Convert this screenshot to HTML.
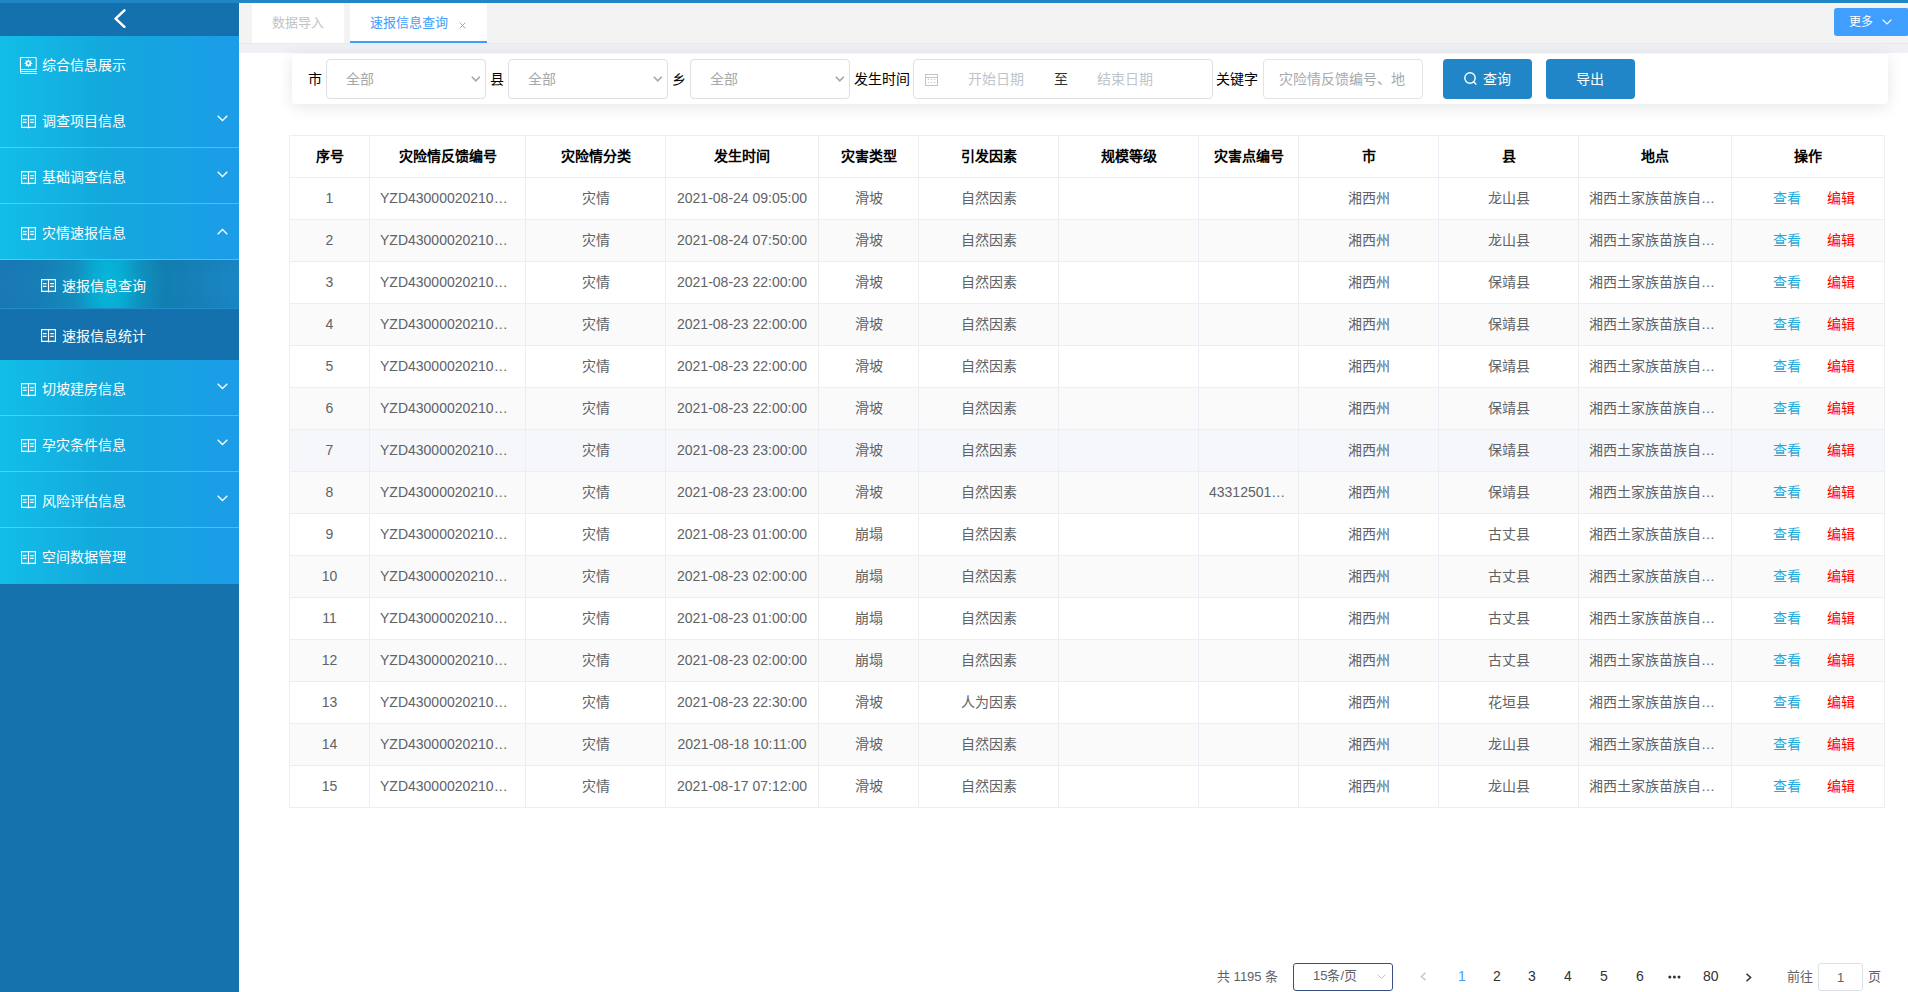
<!DOCTYPE html>
<html lang="zh-CN"><head><meta charset="utf-8">
<style>
*{box-sizing:border-box;margin:0;padding:0}
html,body{width:1908px;height:992px;overflow:hidden;background:#fff;font-family:"Liberation Sans",sans-serif;font-size:14px;color:#606266}
.topstrip{position:absolute;left:0;top:0;width:1908px;height:3px;background:#2086c6}
#side{position:absolute;left:0;top:0;width:239px;height:992px;background:#1572ad}
#side .hdr{position:absolute;left:0;top:3px;width:239px;height:33px;background:#1571ad}
#side .hdr svg{position:absolute;left:113px;top:5px}
.mi{position:absolute;left:0;width:239px;color:#fff;background:linear-gradient(90deg,#12bee8 0%,#14a8dd 45%,#1b9ce8 100%)}
.mi.bb{border-bottom:1px solid rgba(255,255,255,0.28)}
.mi .ic{position:absolute;left:21px;top:23px}
.mi.first .ic{left:19px;top:20px}
.mi .mt{position:absolute;left:42px;top:1px;line-height:56px;font-size:14px;letter-spacing:0}
.mi .chev{position:absolute;left:217px;top:23px}
.sub{position:absolute;left:0;width:239px;height:50px;color:#fff;background:#1571ad}
.sub.active{height:49px;border-bottom:1px solid #1f8fcc;background:linear-gradient(180deg,rgba(20,90,150,0.06) 0%,rgba(20,90,150,0) 40%,rgba(20,90,150,0) 60%,rgba(20,90,150,0.06) 100%),linear-gradient(90deg,#1a78b6 0%,#177fb6 18%,#1290c0 32%,#09aad3 39%,#06b6da 45%,#08aed5 51%,#0e92c0 59%,#127fb0 69%,#1680b8 82%,#1a87c6 100%)}
.sub .ic{position:absolute;left:41px;top:19px}
.sub .mt{position:absolute;left:62px;top:1px;line-height:50px}
#tabs{position:absolute;left:239px;top:3px;width:1669px;height:40px;background:#f3f3f3;border-left:1px solid #fff}
.tab{position:absolute;top:0;height:40px;background:#fff;font-size:13px;line-height:40px}
.tab1{left:12px;width:92px;color:#c2c2c2;text-align:center}
.tab2{left:110px;width:137px;color:#409eff;border-bottom:2px solid #409eff}
.more{position:absolute;left:1594px;top:5px;width:75px;height:28px;background:#409eff;border-radius:3px;color:#fff;font-size:12px;line-height:28px}
#band{position:absolute;left:239px;top:43px;width:1669px;height:10px;background:#eff0f3;border-top:1px solid #e8e9ec}
#card{position:absolute;left:292px;top:54px;width:1596px;height:50px;background:#fff;border-radius:4px;box-shadow:0 3px 15px 0 rgba(0,0,0,0.1)}
.lbl{position:absolute;top:0;line-height:50px;color:#000;font-size:14px}
.sel{position:absolute;top:5px;height:40px;border:1px solid #dcdfe6;border-radius:4px;color:#a6a8ac;line-height:38px;padding-left:19px}
.sel svg{position:absolute;left:144px;top:16px}
.btn{position:absolute;top:5px;height:40px;width:89px;border-radius:4px;background:#2086c7;color:#fff;line-height:40px;text-align:center}
#tbl{position:absolute;left:289px;top:135px;border-collapse:collapse;table-layout:fixed;width:1596px;border-top:1px solid #ebeef5;border-left:1px solid #ebeef5}
#tbl th,#tbl td{border-right:1px solid #ebeef5;border-bottom:1px solid #ebeef5;text-align:center;height:42px;padding:0 10px 1px;white-space:nowrap;overflow:hidden;line-height:20px}
#tbl th{color:#000;font-weight:bold;font-size:14px}
#tbl td{color:#606266;font-size:14px}
#tbl tr.st td{background:#fafafa}
#tbl tr.hv td{background:#f5f7fa}
.el{overflow:hidden;text-overflow:ellipsis;white-space:nowrap}
.op{padding-left:22px !important}
.op .vw{color:#1fa8dc;margin-right:26px}
.op .ed{color:#f00}
#pg{position:absolute;left:0;top:962px;width:1908px;height:30px;font-size:13px;color:#606266}
#pg .it{position:absolute;top:0;line-height:28px}
#pg .pn{font-size:14px;top:-0.5px}
</style></head><body>
<div id="side">
 <div class="hdr"><svg width="14" height="20" viewBox="0 0 14 20"><path d="M11.4 2.4 L2.6 10.6 L11.4 18.8" fill="none" stroke="#fff" stroke-width="2.5" stroke-linecap="round" stroke-linejoin="round"/></svg></div>
 <div class="mi first" style="top:36px;height:56px"><svg class="ic" width="19" height="19" viewBox="0 0 19 19"><g fill="none" stroke="#fff" stroke-width="1"><path d="M1.45 1.55 H17.2 V13.55 H1.45 Z" stroke-linejoin="miter"/><path d="M1.45 13.5 V16.4 Q1.45 17.45 2.5 17.45 H17.9"/><path d="M2.3 15.5 H17.7"/></g><path d="M9.40 3.00 L10.38 4.94 L12.44 4.26 L11.76 6.32 L13.70 7.30 L11.76 8.28 L12.44 10.34 L10.38 9.66 L9.40 11.60 L8.42 9.66 L6.36 10.34 L7.04 8.28 L5.10 7.30 L7.04 6.32 L6.36 4.26 L8.42 4.94 Z M10.6 7.3 A1.2 1.2 0 1 0 8.200000000000001 7.3 A1.2 1.2 0 1 0 10.6 7.3 Z" fill="#fff" fill-rule="evenodd"/></svg><span class="mt">综合信息展示</span></div><div class="mi bb" style="top:92px;height:56px"><svg class="ic" width="16" height="15" viewBox="0 0 16 15"><g fill="none" stroke="#fff" stroke-width="1.1"><path d="M0.6 0.6 H14.4 V12.4 H0.6 Z"/><path d="M7.5 0.6 V13.4"/><path d="M2 4.6 H5.6 M2 7.4 H5.6 M9.2 4.6 H12.8 M9.2 7.4 H12.8"/></g></svg><span class="mt">调查项目信息</span><svg class="chev" width="11" height="7" viewBox="0 0 11 7"><path d="M0.7 0.7 L5.5 5.5 L10.3 0.7" fill="none" stroke="#fff" stroke-width="1.3"/></svg></div><div class="mi bb" style="top:148px;height:56px"><svg class="ic" width="16" height="15" viewBox="0 0 16 15"><g fill="none" stroke="#fff" stroke-width="1.1"><path d="M0.6 0.6 H14.4 V12.4 H0.6 Z"/><path d="M7.5 0.6 V13.4"/><path d="M2 4.6 H5.6 M2 7.4 H5.6 M9.2 4.6 H12.8 M9.2 7.4 H12.8"/></g></svg><span class="mt">基础调查信息</span><svg class="chev" width="11" height="7" viewBox="0 0 11 7"><path d="M0.7 0.7 L5.5 5.5 L10.3 0.7" fill="none" stroke="#fff" stroke-width="1.3"/></svg></div><div class="mi bb" style="top:204px;height:56px"><svg class="ic" width="16" height="15" viewBox="0 0 16 15"><g fill="none" stroke="#fff" stroke-width="1.1"><path d="M0.6 0.6 H14.4 V12.4 H0.6 Z"/><path d="M7.5 0.6 V13.4"/><path d="M2 4.6 H5.6 M2 7.4 H5.6 M9.2 4.6 H12.8 M9.2 7.4 H12.8"/></g></svg><span class="mt">灾情速报信息</span><svg class="chev" style="top:24px" width="11" height="7" viewBox="0 0 11 7"><path d="M0.7 6.3 L5.5 1.5 L10.3 6.3" fill="none" stroke="#fff" stroke-width="1.3"/></svg></div><div class="mi bb" style="top:360px;height:56px"><svg class="ic" width="16" height="15" viewBox="0 0 16 15"><g fill="none" stroke="#fff" stroke-width="1.1"><path d="M0.6 0.6 H14.4 V12.4 H0.6 Z"/><path d="M7.5 0.6 V13.4"/><path d="M2 4.6 H5.6 M2 7.4 H5.6 M9.2 4.6 H12.8 M9.2 7.4 H12.8"/></g></svg><span class="mt">切坡建房信息</span><svg class="chev" width="11" height="7" viewBox="0 0 11 7"><path d="M0.7 0.7 L5.5 5.5 L10.3 0.7" fill="none" stroke="#fff" stroke-width="1.3"/></svg></div><div class="mi bb" style="top:416px;height:56px"><svg class="ic" width="16" height="15" viewBox="0 0 16 15"><g fill="none" stroke="#fff" stroke-width="1.1"><path d="M0.6 0.6 H14.4 V12.4 H0.6 Z"/><path d="M7.5 0.6 V13.4"/><path d="M2 4.6 H5.6 M2 7.4 H5.6 M9.2 4.6 H12.8 M9.2 7.4 H12.8"/></g></svg><span class="mt">孕灾条件信息</span><svg class="chev" width="11" height="7" viewBox="0 0 11 7"><path d="M0.7 0.7 L5.5 5.5 L10.3 0.7" fill="none" stroke="#fff" stroke-width="1.3"/></svg></div><div class="mi bb" style="top:472px;height:56px"><svg class="ic" width="16" height="15" viewBox="0 0 16 15"><g fill="none" stroke="#fff" stroke-width="1.1"><path d="M0.6 0.6 H14.4 V12.4 H0.6 Z"/><path d="M7.5 0.6 V13.4"/><path d="M2 4.6 H5.6 M2 7.4 H5.6 M9.2 4.6 H12.8 M9.2 7.4 H12.8"/></g></svg><span class="mt">风险评估信息</span><svg class="chev" width="11" height="7" viewBox="0 0 11 7"><path d="M0.7 0.7 L5.5 5.5 L10.3 0.7" fill="none" stroke="#fff" stroke-width="1.3"/></svg></div><div class="mi" style="top:528px;height:56px"><svg class="ic" width="16" height="15" viewBox="0 0 16 15"><g fill="none" stroke="#fff" stroke-width="1.1"><path d="M0.6 0.6 H14.4 V12.4 H0.6 Z"/><path d="M7.5 0.6 V13.4"/><path d="M2 4.6 H5.6 M2 7.4 H5.6 M9.2 4.6 H12.8 M9.2 7.4 H12.8"/></g></svg><span class="mt">空间数据管理</span></div>
 <div class="sub active" style="top:260px"><svg class="ic" width="16" height="15" viewBox="0 0 16 15"><g fill="none" stroke="#fff" stroke-width="1.1"><path d="M0.6 0.6 H14.4 V12.4 H0.6 Z"/><path d="M7.5 0.6 V13.4"/><path d="M2 4.6 H5.6 M2 7.4 H5.6 M9.2 4.6 H12.8 M9.2 7.4 H12.8"/></g></svg><span class="mt">速报信息查询</span></div>
<div class="sub" style="top:310px"><svg class="ic" width="16" height="15" viewBox="0 0 16 15"><g fill="none" stroke="#fff" stroke-width="1.1"><path d="M0.6 0.6 H14.4 V12.4 H0.6 Z"/><path d="M7.5 0.6 V13.4"/><path d="M2 4.6 H5.6 M2 7.4 H5.6 M9.2 4.6 H12.8 M9.2 7.4 H12.8"/></g></svg><span class="mt">速报信息统计</span></div>
</div>
<div class="topstrip"></div>
<div id="tabs">
 <div class="tab tab1">数据导入</div>
 <div class="tab tab2"><span style="position:absolute;left:20px;top:0">速报信息查询</span><svg style="position:absolute;left:109px;top:18.5px" width="7" height="7" viewBox="0 0 7 7"><path d="M0.6 0.6 L6.4 6.4 M6.4 0.6 L0.6 6.4" stroke="#5aa9ff" stroke-width="0.9"/></svg></div>
 <div class="more"><span style="position:absolute;left:15px">更多</span><svg style="position:absolute;left:48px;top:11px" width="10" height="6" viewBox="0 0 10 6"><path d="M0.6 0.6 L5 5 L9.4 0.6" fill="none" stroke="#fff" stroke-width="1.2"/></svg></div>
</div>
<div id="band"></div>
<div id="card">
 <div class="lbl" style="left:16px">市</div>
 <div class="sel" style="left:34px;width:160px">全部<svg width="10" height="7" viewBox="0 0 10 7"><path d="M0.8 0.8 L4.8 4.8 L8.8 0.8" fill="none" stroke="#a4a6aa" stroke-width="1.6"/></svg></div>
 <div class="lbl" style="left:198px">县</div>
 <div class="sel" style="left:216px;width:160px">全部<svg width="10" height="7" viewBox="0 0 10 7"><path d="M0.8 0.8 L4.8 4.8 L8.8 0.8" fill="none" stroke="#a4a6aa" stroke-width="1.6"/></svg></div>
 <div class="lbl" style="left:380px">乡</div>
 <div class="sel" style="left:398px;width:160px">全部<svg width="10" height="7" viewBox="0 0 10 7"><path d="M0.8 0.8 L4.8 4.8 L8.8 0.8" fill="none" stroke="#a4a6aa" stroke-width="1.6"/></svg></div>
 <div class="lbl" style="left:562px">发生时间</div>
 <div class="sel" style="left:621px;width:300px;padding:0">
   <svg style="position:absolute;left:11px;top:13px" width="13" height="13" viewBox="0 0 13 13"><g fill="none" stroke="#c0c4cc" stroke-width="1"><rect x="0.5" y="1.5" width="12" height="11"/><line x1="0.5" y1="4.5" x2="12.5" y2="4.5"/></g><g fill="#c0c4cc"><rect x="3" y="6" width="1.2" height="1"/><rect x="6" y="6" width="1.2" height="1"/><rect x="9" y="6" width="1.2" height="1"/><rect x="3" y="9" width="1.2" height="1"/><rect x="6" y="9" width="1.2" height="1"/><rect x="9" y="9" width="1.2" height="1"/></g></svg>
   <span style="position:absolute;left:54px;color:#c0c4cc">开始日期</span>
   <span style="position:absolute;left:140px;color:#303133">至</span>
   <span style="position:absolute;left:183px;color:#c0c4cc">结束日期</span>
 </div>
 <div class="lbl" style="left:924px">关键字</div>
 <div class="sel" style="left:971px;width:160px;padding-left:15px;overflow:hidden;white-space:nowrap;color:#a8a9ab;border-color:#e2e4e9"><span style="display:block;width:127px;overflow:hidden">灾险情反馈编号、地点</span></div>
 <div class="btn" style="left:1151px"><svg style="position:absolute;left:21px;top:13px" width="13" height="14" viewBox="0 0 13 14"><circle cx="6" cy="6" r="5.2" fill="none" stroke="#fff" stroke-width="1.4"/><line x1="9.8" y1="9.8" x2="12.3" y2="12.6" stroke="#fff" stroke-width="1.4"/></svg><span style="position:absolute;left:40px;top:0">查询</span></div>
 <div class="btn" style="left:1254px;text-indent:-2px">导出</div>
</div>
<table id="tbl"><colgroup><col style="width:80px"><col style="width:156px"><col style="width:140px"><col style="width:153px"><col style="width:100px"><col style="width:140px"><col style="width:140px"><col style="width:100px"><col style="width:140px"><col style="width:140px"><col style="width:153px"><col style="width:153px"></colgroup><thead><tr><th>序号</th><th>灾险情反馈编号</th><th>灾险情分类</th><th>发生时间</th><th>灾害类型</th><th>引发因素</th><th>规模等级</th><th>灾害点编号</th><th>市</th><th>县</th><th>地点</th><th>操作</th></tr></thead><tbody><tr><td>1</td><td><div class="el">YZD430000202108000001</div></td><td>灾情</td><td>2021-08-24 09:05:00</td><td>滑坡</td><td>自然因素</td><td></td><td><div class="el"></div></td><td>湘西州</td><td>龙山县</td><td><div class="el">湘西土家族苗族自治州龙山县</div></td><td class="op"><span class="vw">查看</span><span class="ed">编辑</span></td></tr><tr class="st"><td>2</td><td><div class="el">YZD430000202108000002</div></td><td>灾情</td><td>2021-08-24 07:50:00</td><td>滑坡</td><td>自然因素</td><td></td><td><div class="el"></div></td><td>湘西州</td><td>龙山县</td><td><div class="el">湘西土家族苗族自治州龙山县</div></td><td class="op"><span class="vw">查看</span><span class="ed">编辑</span></td></tr><tr><td>3</td><td><div class="el">YZD430000202108000003</div></td><td>灾情</td><td>2021-08-23 22:00:00</td><td>滑坡</td><td>自然因素</td><td></td><td><div class="el"></div></td><td>湘西州</td><td>保靖县</td><td><div class="el">湘西土家族苗族自治州保靖县</div></td><td class="op"><span class="vw">查看</span><span class="ed">编辑</span></td></tr><tr class="st"><td>4</td><td><div class="el">YZD430000202108000004</div></td><td>灾情</td><td>2021-08-23 22:00:00</td><td>滑坡</td><td>自然因素</td><td></td><td><div class="el"></div></td><td>湘西州</td><td>保靖县</td><td><div class="el">湘西土家族苗族自治州保靖县</div></td><td class="op"><span class="vw">查看</span><span class="ed">编辑</span></td></tr><tr><td>5</td><td><div class="el">YZD430000202108000005</div></td><td>灾情</td><td>2021-08-23 22:00:00</td><td>滑坡</td><td>自然因素</td><td></td><td><div class="el"></div></td><td>湘西州</td><td>保靖县</td><td><div class="el">湘西土家族苗族自治州保靖县</div></td><td class="op"><span class="vw">查看</span><span class="ed">编辑</span></td></tr><tr class="st"><td>6</td><td><div class="el">YZD430000202108000006</div></td><td>灾情</td><td>2021-08-23 22:00:00</td><td>滑坡</td><td>自然因素</td><td></td><td><div class="el"></div></td><td>湘西州</td><td>保靖县</td><td><div class="el">湘西土家族苗族自治州保靖县</div></td><td class="op"><span class="vw">查看</span><span class="ed">编辑</span></td></tr><tr class="hv"><td>7</td><td><div class="el">YZD430000202108000007</div></td><td>灾情</td><td>2021-08-23 23:00:00</td><td>滑坡</td><td>自然因素</td><td></td><td><div class="el"></div></td><td>湘西州</td><td>保靖县</td><td><div class="el">湘西土家族苗族自治州保靖县</div></td><td class="op"><span class="vw">查看</span><span class="ed">编辑</span></td></tr><tr class="st"><td>8</td><td><div class="el">YZD430000202108000008</div></td><td>灾情</td><td>2021-08-23 23:00:00</td><td>滑坡</td><td>自然因素</td><td></td><td><div class="el">433125010001</div></td><td>湘西州</td><td>保靖县</td><td><div class="el">湘西土家族苗族自治州保靖县</div></td><td class="op"><span class="vw">查看</span><span class="ed">编辑</span></td></tr><tr><td>9</td><td><div class="el">YZD430000202108000009</div></td><td>灾情</td><td>2021-08-23 01:00:00</td><td>崩塌</td><td>自然因素</td><td></td><td><div class="el"></div></td><td>湘西州</td><td>古丈县</td><td><div class="el">湘西土家族苗族自治州古丈县</div></td><td class="op"><span class="vw">查看</span><span class="ed">编辑</span></td></tr><tr class="st"><td>10</td><td><div class="el">YZD430000202108000010</div></td><td>灾情</td><td>2021-08-23 02:00:00</td><td>崩塌</td><td>自然因素</td><td></td><td><div class="el"></div></td><td>湘西州</td><td>古丈县</td><td><div class="el">湘西土家族苗族自治州古丈县</div></td><td class="op"><span class="vw">查看</span><span class="ed">编辑</span></td></tr><tr><td>11</td><td><div class="el">YZD430000202108000011</div></td><td>灾情</td><td>2021-08-23 01:00:00</td><td>崩塌</td><td>自然因素</td><td></td><td><div class="el"></div></td><td>湘西州</td><td>古丈县</td><td><div class="el">湘西土家族苗族自治州古丈县</div></td><td class="op"><span class="vw">查看</span><span class="ed">编辑</span></td></tr><tr class="st"><td>12</td><td><div class="el">YZD430000202108000012</div></td><td>灾情</td><td>2021-08-23 02:00:00</td><td>崩塌</td><td>自然因素</td><td></td><td><div class="el"></div></td><td>湘西州</td><td>古丈县</td><td><div class="el">湘西土家族苗族自治州古丈县</div></td><td class="op"><span class="vw">查看</span><span class="ed">编辑</span></td></tr><tr><td>13</td><td><div class="el">YZD430000202108000013</div></td><td>灾情</td><td>2021-08-23 22:30:00</td><td>滑坡</td><td>人为因素</td><td></td><td><div class="el"></div></td><td>湘西州</td><td>花垣县</td><td><div class="el">湘西土家族苗族自治州花垣县</div></td><td class="op"><span class="vw">查看</span><span class="ed">编辑</span></td></tr><tr class="st"><td>14</td><td><div class="el">YZD430000202108000014</div></td><td>灾情</td><td>2021-08-18 10:11:00</td><td>滑坡</td><td>自然因素</td><td></td><td><div class="el"></div></td><td>湘西州</td><td>龙山县</td><td><div class="el">湘西土家族苗族自治州龙山县</div></td><td class="op"><span class="vw">查看</span><span class="ed">编辑</span></td></tr><tr><td>15</td><td><div class="el">YZD430000202108000015</div></td><td>灾情</td><td>2021-08-17 07:12:00</td><td>滑坡</td><td>自然因素</td><td></td><td><div class="el"></div></td><td>湘西州</td><td>龙山县</td><td><div class="el">湘西土家族苗族自治州龙山县</div></td><td class="op"><span class="vw">查看</span><span class="ed">编辑</span></td></tr></tbody></table>
<div id="pg">
 <span class="it" style="left:1217px;top:1px">共 1195 条</span>
 <div style="position:absolute;left:1293px;top:1px;width:100px;height:28px;border:1px solid #3a4f86;border-radius:3px"><span style="position:absolute;left:19px;top:-1px;line-height:26px">15条/页</span><svg style="position:absolute;left:83px;top:10px" width="9" height="5" viewBox="0 0 9 5"><path d="M0.5 0.5 L4.5 4.5 L8.5 0.5" fill="none" stroke="#c0c4cc" stroke-width="1"/></svg></div>
 <svg style="position:absolute;left:1419px;top:10px" width="8" height="9" viewBox="0 0 8 9"><path d="M6.5 0.7 L2.4 4.5 L6.5 8.3" fill="none" stroke="#c0c4cc" stroke-width="1.5"/></svg>
 <span class="it pn" style="left:1458px;color:#409eff">1</span>
 <span class="it pn" style="left:1493px;color:#303133">2</span>
 <span class="it pn" style="left:1528px;color:#303133">3</span>
 <span class="it pn" style="left:1564px;color:#303133">4</span>
 <span class="it pn" style="left:1600px;color:#303133">5</span>
 <span class="it pn" style="left:1636px;color:#303133">6</span>
 <svg style="position:absolute;left:1668px;top:13px" width="13" height="4" viewBox="0 0 13 4"><g fill="#303133"><circle cx="1.8" cy="2" r="1.5"/><circle cx="6.4" cy="2" r="1.5"/><circle cx="11" cy="2" r="1.5"/></g></svg>
 <span class="it pn" style="left:1703px;color:#303133">80</span>
 <svg style="position:absolute;left:1745px;top:10.5px" width="8" height="9" viewBox="0 0 8 9"><path d="M1.5 0.7 L5.6 4.5 L1.5 8.3" fill="none" stroke="#303133" stroke-width="1.5"/></svg>
 <span class="it" style="left:1787px;top:1px">前往</span>
 <div style="position:absolute;left:1818px;top:1px;width:45px;height:28px;border:1px solid #dcdfe6;border-radius:3px;text-align:center;line-height:26px;color:#606266;padding-top:1px">1</div>
 <span class="it" style="left:1868px;top:1px">页</span>
</div>
</body></html>
